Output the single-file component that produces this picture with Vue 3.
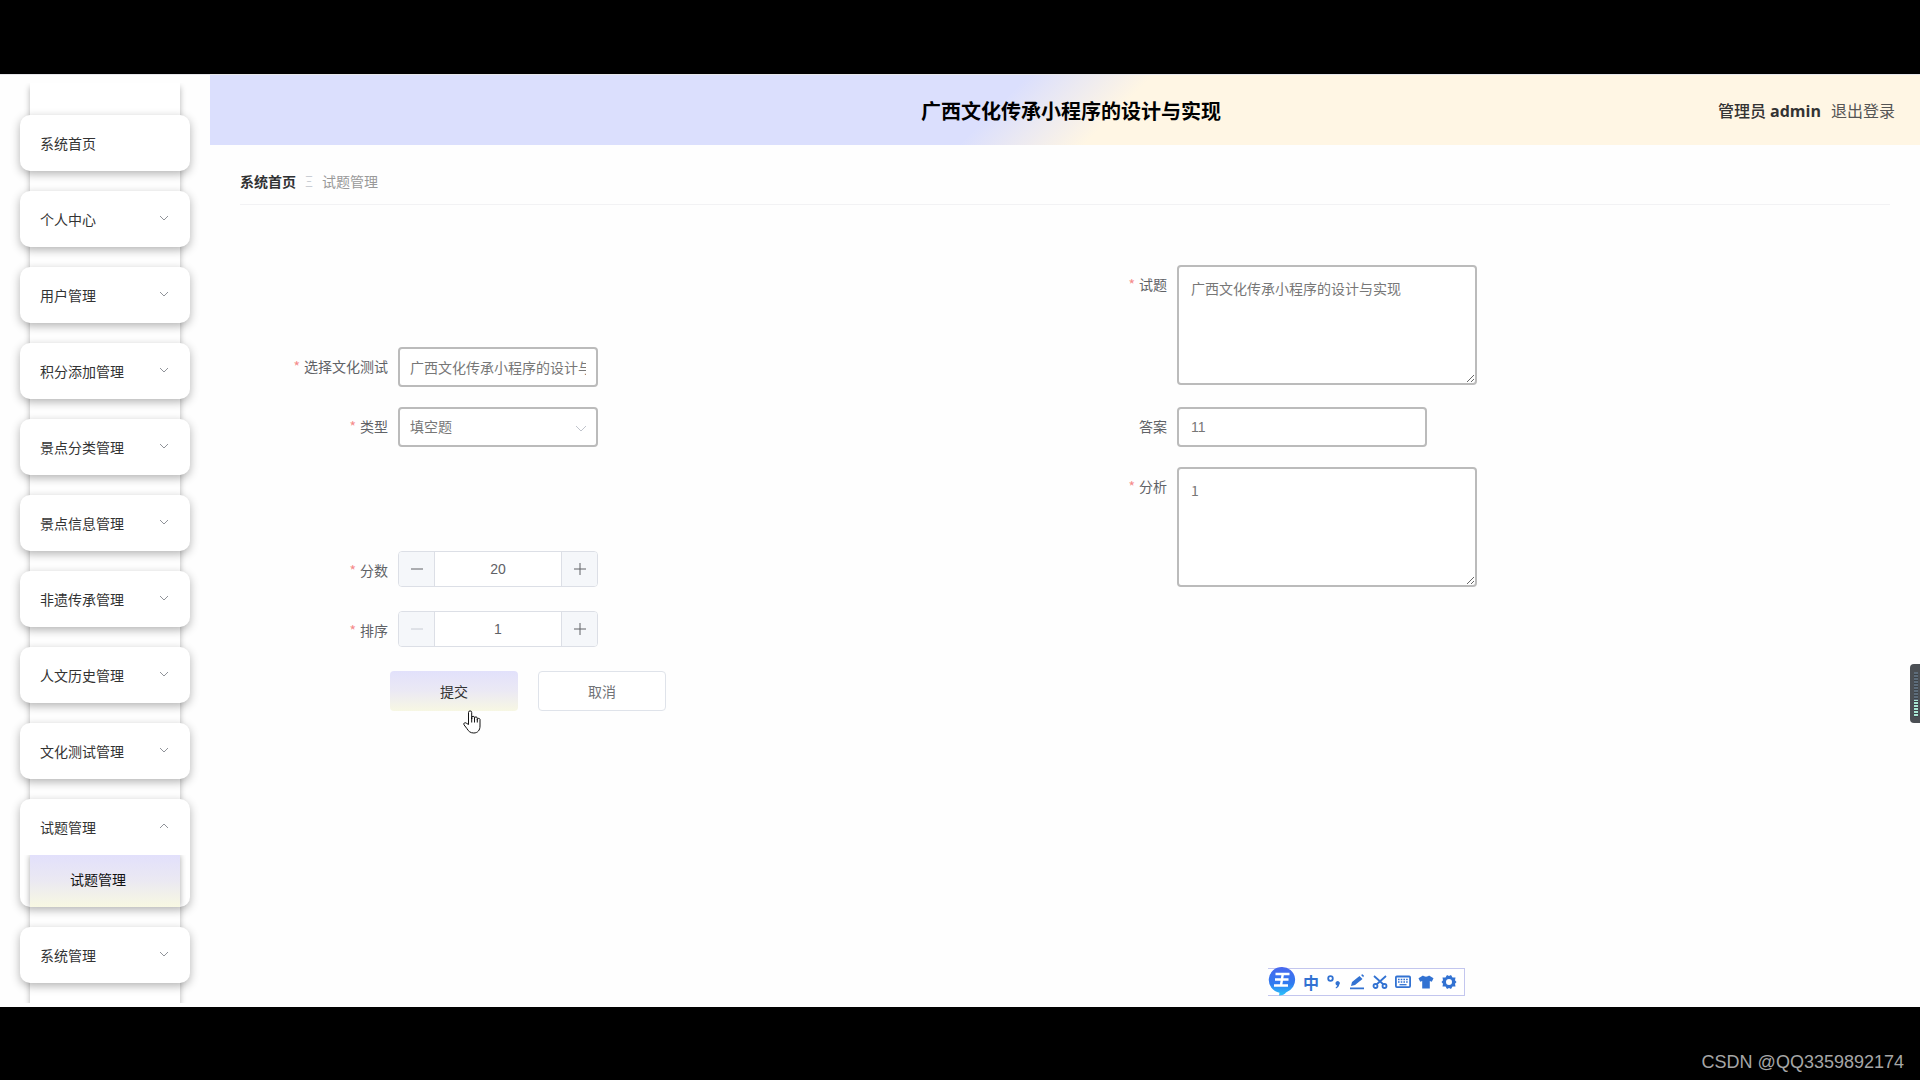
<script setup>
import { ref } from 'vue'

const menu = [
  { label: '系统首页' },
  { label: '个人中心', expandable: true },
  { label: '用户管理', expandable: true },
  { label: '积分添加管理', expandable: true },
  { label: '景点分类管理', expandable: true },
  { label: '景点信息管理', expandable: true },
  { label: '非遗传承管理', expandable: true },
  { label: '人文历史管理', expandable: true },
  { label: '文化测试管理', expandable: true },
  { label: '试题管理', expandable: true, children: ['试题管理'] },
  { label: '系统管理', expandable: true },
]

const paper = ref('广西文化传承小程序的设计与实现')
const question = ref('广西文化传承小程序的设计与实现')
const type = ref('填空题')
const answer = ref('11')
const analysis = ref('1')
const score = ref(20)
const sort = ref(1)
</script>

<template>
  <div class="screen">
    <div class="app">
      <nav class="sidebar">
        <ul class="menu">
          <li v-for="item in menu" :key="item.label" class="card">
            <a href="#" class="card-title">
              <span>{{ item.label }}</span>
              <svg v-if="item.expandable" class="arrow" :class="{ open: item.children }" viewBox="0 0 10 10">
                <path d="M1 3l4 4 4-4" />
              </svg>
            </a>
            <div v-if="item.children" class="submenu">
              <a v-for="child in item.children" :key="child" href="#" class="subitem">{{ child }}</a>
            </div>
          </li>
        </ul>
      </nav>

      <div class="content">
        <header class="topbar">
          <h1>广西文化传承小程序的设计与实现</h1>
          <div class="user">
            <strong>管理员 <b>admin</b></strong>
            <a href="#">退出登录</a>
          </div>
        </header>

        <main class="page">
          <div class="crumbs">
            <a href="#">系统首页</a>
            <span class="sep">Ξ</span>
            <span class="current">试题管理</span>
          </div>

          <form class="form" @submit.prevent>
            <div class="field">
              <label class="required" for="paper">选择文化测试</label>
              <input id="paper" v-model="paper" class="box short" type="text" />
            </div>
            <div class="field">
              <label class="required" for="question">试题</label>
              <textarea id="question" v-model="question" class="box area"></textarea>
            </div>

            <div class="field">
              <label class="required" for="type">类型</label>
              <div class="select">
                <select id="type" v-model="type" class="box short">
                  <option>填空题</option>
                </select>
                <svg class="caret" viewBox="0 0 10 10"><path d="M0 3l5 5 5-5" /></svg>
              </div>
            </div>
            <div class="field">
              <label for="answer">答案</label>
              <input id="answer" v-model="answer" class="box medium" type="text" />
            </div>

            <div class="field">
              <label class="required" for="score">分数</label>
              <div class="stepper">
                <button type="button" aria-label="减少分数" @click="score--">
                  <svg viewBox="0 0 12 12"><path d="M0 6h12" /></svg>
                </button>
                <input id="score" v-model="score" type="text" />
                <button type="button" aria-label="增加分数" @click="score++">
                  <svg viewBox="0 0 12 12"><path d="M0 6h12M6 0v12" /></svg>
                </button>
              </div>
            </div>
            <div class="field">
              <label class="required" for="analysis">分析</label>
              <textarea id="analysis" v-model="analysis" class="box area"></textarea>
            </div>

            <div class="field wide">
              <label class="required" for="sort">排序</label>
              <div class="stepper">
                <button type="button" aria-label="减少排序" :disabled="sort <= 1" @click="sort--">
                  <svg viewBox="0 0 12 12"><path d="M0 6h12" /></svg>
                </button>
                <input id="sort" v-model="sort" type="text" />
                <button type="button" aria-label="增加排序" @click="sort++">
                  <svg viewBox="0 0 12 12"><path d="M0 6h12M6 0v12" /></svg>
                </button>
              </div>
            </div>

            <div class="actions wide">
              <button type="submit" class="btn primary">
                提交
                <svg class="pointer" viewBox="0 0 18 24">
                  <path
                    d="M5.5 14.5V2.5a1.6 1.6 0 0 1 3.2 0V9V7.700a1.4 1.4 0 0 1 2.8 0V9.300V8.300a1.400 1.400 0 0 1 2.800 0v1.800V9.400a1.400 1.400 0 0 1 2.700 0V16c0 4.200-2.300 7-6.200 7-3.300 0-5.300-1.600-6.800-4.300L1 14.800c-.8-1.500.9-2.800 2.200-1.700z"
                  />
                  <path d="M8.700 8v4.500M11.500 9v3.500M14.300 10v2.500" />
                </svg>
              </button>
              <button type="button" class="btn">取消</button>
            </div>
          </form>
        </main>
      </div>

      <div class="ime">
        <svg class="ime-logo" viewBox="0 0 28 30">
          <defs>
            <linearGradient id="imeFill" x1="0" y1="0" x2="0" y2="1">
              <stop offset="0" stop-color="#4a68ee" />
              <stop offset="0.6" stop-color="#2f7bf0" />
              <stop offset="1" stop-color="#2cc4fb" />
            </linearGradient>
          </defs>
          <path d="M14 1a13 13 0 0 1 4 25.400C17 28 14 29.500 11 29.500l.5-2.700A13 13 0 0 1 14 1z" fill="url(#imeFill)" />
          <path d="M7.500 8h14M7 13.500h13.500M6 19.500h14M14.800 8l-1.800 11.500" stroke="#fff" stroke-width="2.400" fill="none" />
        </svg>
        <span class="ime-mode">中</span>
        <svg viewBox="0 0 16 16">
          <circle cx="4.500" cy="4.500" r="2.300" class="line" />
          <path d="M9.500 9.300a2.200 2.200 0 1 1 3.700 1.500c-.3 1.800-1.400 3-3.200 3.600l-.4-1c1-.4 1.500-1 1.600-1.800-1-.2-1.700-1.200-1.700-2.300z" />
        </svg>
        <svg viewBox="0 0 16 16">
          <path d="M2 12l1-4 7.500-6 3 3L6 11zM12 1l1.500-.7 1.500 1.500-.8 1.500zM1 13.500h14v1.800H1z" />
        </svg>
        <svg viewBox="0 0 16 16">
          <path class="line" d="M2 2l9.500 8.500M14 2L4.500 10.500" />
          <circle class="line" cx="3.500" cy="12" r="2" />
          <circle class="line" cx="12.500" cy="12" r="2" />
        </svg>
        <svg viewBox="0 0 16 16">
          <rect class="line" x="0.900" y="2.500" width="14.200" height="10.600" rx="1" />
          <path class="thin" d="M3 5.500h10M3 8h10" stroke-dasharray="1.600 1.100" />
          <path class="thin" d="M4.500 10.700h7" />
        </svg>
        <svg viewBox="0 0 16 16">
          <path d="M5 1.500c1 1.500 5 1.500 6 0l4.500 2.700-1.700 3.600-2-.8v7.500H4.200V7l-2 .8L.5 4.200z" />
        </svg>
        <svg viewBox="0 0 16 16">
          <path
            fill-rule="evenodd"
            d="M6 1L8 2l2-1 1.500 2.500H14.500L14 6.300 15.500 8 14 9.700l.5 2.800H11.500L10 15l-2-1-2 1-1.500-2.500H1.500L2 9.700.5 8 2 6.300 1.500 3.500H4.500zM8 5a3 3 0 1 0 0 6 3 3 0 0 0 0-6z"
          />
        </svg>
      </div>

      <div class="meter"><i></i></div>
    </div>

    <footer class="watermark">CSDN @QQ3359892174</footer>
  </div>
</template>

<style>
body {
  margin: 0;
  background: #000;
}
</style>

<style scoped>
* {
  box-sizing: border-box;
}

.screen {
  display: flex;
  flex-direction: column;
  min-height: 100vh;
  padding-top: 74px;
  background: #000;
  font-family: 'Noto Sans CJK SC', sans-serif;
  font-size: 14px;
  color: #606266;
}

a {
  color: inherit;
  text-decoration: none;
}

svg {
  display: block;
}

.app {
  position: relative;
  flex: 1;
  display: flex;
  background: #fefefe;
  border-top: 1px solid #e6e6ea;
}

/* Sidebar */
.sidebar {
  flex: none;
  width: 210px;
  padding: 8px 30px 4px;
}

.menu {
  height: 100%;
  margin: 0;
  padding: 32px 0 20px;
  list-style: none;
  background: #fff;
  box-shadow: 0 4px 6px rgba(0, 0, 0, 0.3);
  clip-path: inset(0 -20px);
}

.card {
  margin: 0 -10px 20px;
  border-radius: 10px;
  background: #fff;
  box-shadow: 0 3px 10px rgba(0, 0, 0, 0.3);
}

.card:last-child {
  margin-bottom: 0;
}

.card-title {
  display: flex;
  align-items: center;
  justify-content: space-between;
  height: 56px;
  padding: 0 21px 0 20px;
  color: #333;
}

.arrow {
  width: 10px;
  height: 10px;
  margin-bottom: 2px;
  fill: none;
  stroke: #909399;
}

.arrow.open {
  transform: rotate(180deg);
}

.submenu {
  padding: 0 10px;
}

.subitem {
  display: block;
  padding: 0 0 4px 40px;
  line-height: 48px;
  color: #111;
  background: linear-gradient(180deg, #e2e0fb, #ebe9f2 50%, #f8f8e2);
  box-shadow: 0 0 6px rgba(0, 0, 0, 0.35);
  clip-path: inset(0 -6px);
}

/* Header */
.content {
  flex: 1;
  min-width: 0;
}

.topbar {
  display: grid;
  grid-template-columns: 1fr auto 1fr;
  align-items: center;
  height: 70px;
  padding: 0 25px 0 37px;
  background: linear-gradient(135deg, #dbdffd 46%, #fff6e4 53%);
}

.topbar h1 {
  grid-column: 2;
  margin: 0;
  font-size: 20px;
  font-weight: 700;
  color: #000;
}

.user {
  display: flex;
  justify-content: flex-end;
  gap: 10px;
  font-size: 16px;
  color: #555;
}

.user strong {
  font-family: 'Open Sans', 'Noto Sans CJK SC', sans-serif;
  font-weight: 500;
  color: #333;
}

.user b {
  font-weight: 700;
}

/* Page */
.page {
  padding: 20px 30px;
}

.crumbs {
  display: flex;
  align-items: center;
  height: 40px;
  padding-bottom: 7px;
  border-bottom: 1px solid #f2f2f4;
  color: #999;
}

.crumbs a {
  font-weight: 700;
  color: #303133;
}

.sep {
  width: 26px;
  text-align: center;
  font-weight: 300;
  color: #c0c4cc;
}

.form {
  display: grid;
  grid-template-columns: 1fr 1fr;
  grid-template-rows: 122px 40px 124px 40px auto;
  align-items: end;
  row-gap: 20px;
  padding: 60px 92px 0 0;
}

.field {
  display: flex;
  gap: 10px;
  min-height: 40px;
}

.field:has(.area) {
  align-self: start;
}

.wide {
  grid-column: 1 / -1;
}

.field > label {
  width: 148px;
  line-height: 38px;
  text-align: right;
}

.required::before {
  content: '*';
  margin-right: 4px;
  color: #f58a8a;
}

.box {
  display: block;
  height: 40px;
  padding: 0 12px;
  border: 2px solid #bbb;
  border-radius: 4px;
  background: #fff;
  font-family: 'Liberation Sans', 'Noto Sans CJK SC', sans-serif;
  font-size: 14px;
  color: #777;
  outline: none;
}

.short {
  width: 200px;
  padding: 0 10px;
}

.medium {
  width: 250px;
}

.area {
  width: 300px;
  height: 120px;
  padding: 11px 12px;
  font-family: 'Noto Sans CJK SC', sans-serif;
  line-height: 21px;
}

.select {
  position: relative;
}

select.box {
  appearance: none;
}

.caret {
  position: absolute;
  top: 16px;
  right: 12px;
  width: 10px;
  height: 10px;
  fill: none;
  stroke: #c0c4cc;
  pointer-events: none;
}

.stepper {
  display: flex;
  width: 200px;
  height: 36px;
  border: 1px solid #dcdfe6;
  border-radius: 4px;
  background: #fff;
  overflow: hidden;
}

.stepper button {
  display: grid;
  place-items: center;
  width: 35px;
  padding: 0;
  border: 0;
  background: #f5f7fa;
}

.stepper svg {
  width: 12px;
  height: 12px;
  fill: none;
  stroke: #606266;
}

.stepper button:disabled svg {
  stroke: #c8ccd4;
}

.stepper input {
  flex: 1;
  min-width: 0;
  padding: 0;
  border: solid #dcdfe6;
  border-width: 0 1px;
  font-family: 'Liberation Sans', sans-serif;
  font-size: 14px;
  text-align: center;
  color: #606266;
  outline: none;
}

.actions {
  display: flex;
  gap: 20px;
  padding-left: 150px;
}

.btn {
  position: relative;
  width: 128px;
  height: 40px;
  border: 1px solid #dfe3ea;
  border-radius: 4px;
  background: #fff;
  font-family: inherit;
  font-size: 14px;
  color: #707276;
}

.btn.primary {
  border: 0;
  background: linear-gradient(180deg, #e2e1fb, #ebe9f4 50%, #f7f7e3);
  color: #333;
}

.pointer {
  position: absolute;
  top: 39px;
  left: 73px;
  width: 18px;
  height: 24px;
  fill: #fff;
  stroke: #111;
}

/* Input method toolbar */
.ime {
  position: absolute;
  right: 455px;
  bottom: 11px;
  display: flex;
  align-items: center;
  gap: 7px;
  height: 28px;
  padding-right: 7px;
  border: 1px solid #c3c6ee;
  border-left: 0;
  background: #fff;
  color: #3272d2;
}

.ime svg {
  width: 16px;
  height: 16px;
  fill: #3272d2;
}

.ime svg.ime-logo {
  width: 28px;
  height: 30px;
  margin-bottom: 2px;
}

.ime-mode {
  width: 16px;
  font-size: 16px;
  font-weight: 700;
  line-height: 16px;
}

.ime .line {
  fill: none;
  stroke: #3272d2;
  stroke-width: 1.8;
}

.ime .thin {
  fill: none;
  stroke: #3272d2;
  stroke-width: 1.3;
}

/* Level meter at the window edge */
.meter {
  position: absolute;
  top: 589px;
  right: 0;
  width: 10px;
  height: 59px;
  padding: 8px 2px 6px 4px;
  border-radius: 4px 0 0 4px;
  background: #4b4f54;
}

.meter i {
  display: block;
  height: 100%;
  background:
    repeating-linear-gradient(180deg, transparent 0 2px, #3b4248 2px 3px),
    linear-gradient(180deg, #5d6c7a 62%, #a8e6d2 62%);
}

.watermark {
  height: 74px;
  padding: 42px 16px 0 0;
  font-family: 'Liberation Sans', 'Noto Sans CJK SC', sans-serif;
  font-size: 18px;
  line-height: 26px;
  text-align: right;
  color: #a6a6a6;
}
</style>
